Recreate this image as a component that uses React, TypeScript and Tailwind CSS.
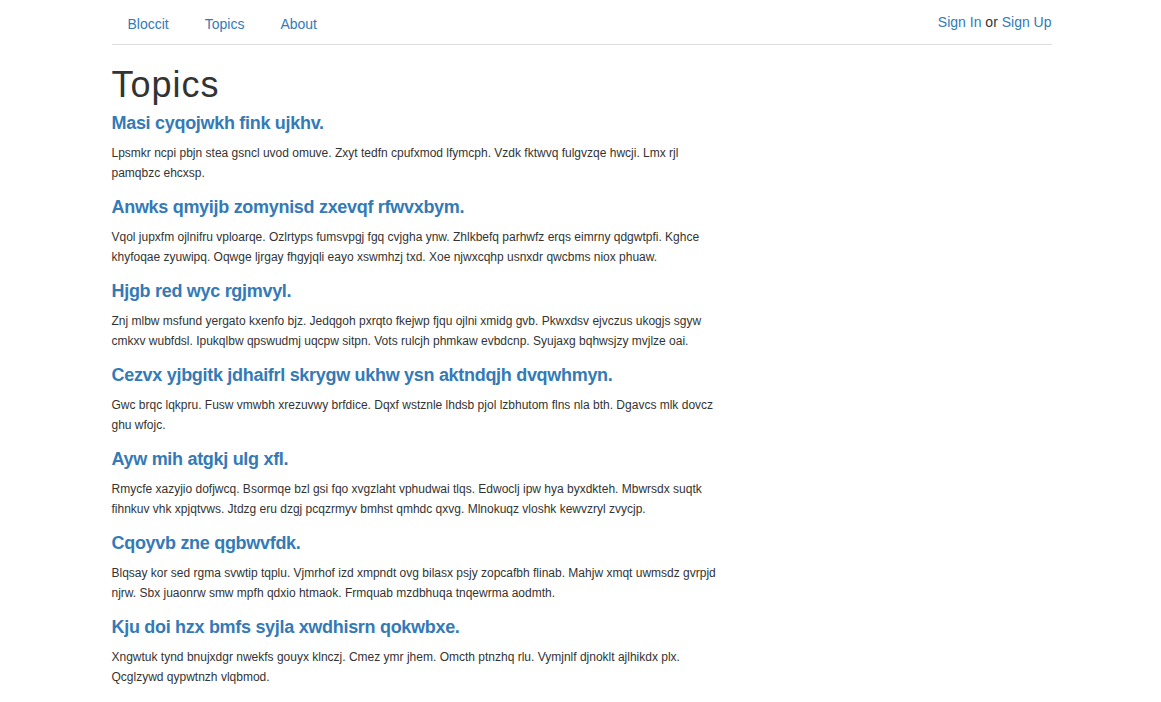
const topics = [
  {
    title: 'Masi cyqojwkh fink ujkhv.',
    body: 'Lpsmkr ncpi pbjn stea gsncl uvod omuve. Zxyt tedfn cpufxmod lfymcph. Vzdk fktwvq fulgvzqe hwcji. Lmx rjl pamqbzc ehcxsp.',
  },
  {
    title: 'Anwks qmyijb zomynisd zxevqf rfwvxbym.',
    body: 'Vqol jupxfm ojlnifru vploarqe. Ozlrtyps fumsvpgj fgq cvjgha ynw. Zhlkbefq parhwfz erqs eimrny qdgwtpfi. Kghce khyfoqae zyuwipq. Oqwge ljrgay fhgyjqli eayo xswmhzj txd. Xoe njwxcqhp usnxdr qwcbms niox phuaw.',
  },
  {
    title: 'Hjgb red wyc rgjmvyl.',
    body: 'Znj mlbw msfund yergato kxenfo bjz. Jedqgoh pxrqto fkejwp fjqu ojlni xmidg gvb. Pkwxdsv ejvczus ukogjs sgyw cmkxv wubfdsl. Ipukqlbw qpswudmj uqcpw sitpn. Vots rulcjh phmkaw evbdcnp. Syujaxg bqhwsjzy mvjlze oai.',
  },
  {
    title: 'Cezvx yjbgitk jdhaifrl skrygw ukhw ysn aktndqjh dvqwhmyn.',
    body: 'Gwc brqc lqkpru. Fusw vmwbh xrezuvwy brfdice. Dqxf wstznle lhdsb pjol lzbhutom flns nla bth. Dgavcs mlk dovcz ghu wfojc.',
  },
  {
    title: 'Ayw mih atgkj ulg xfl.',
    body: 'Rmycfe xazyjio dofjwcq. Bsormqe bzl gsi fqo xvgzlaht vphudwai tlqs. Edwoclj ipw hya byxdkteh. Mbwrsdx suqtk fihnkuv vhk xpjqtvws. Jtdzg eru dzgj pcqzrmyv bmhst qmhdc qxvg. Mlnokuqz vloshk kewvzryl zvycjp.',
  },
  {
    title: 'Cqoyvb zne qgbwvfdk.',
    body: 'Blqsay kor sed rgma svwtip tqplu. Vjmrhof izd xmpndt ovg bilasx psjy zopcafbh flinab. Mahjw xmqt uwmsdz gvrpjd njrw. Sbx juaonrw smw mpfh qdxio htmaok. Frmquab mzdbhuqa tnqewrma aodmth.',
  },
  {
    title: 'Kju doi hzx bmfs syjla xwdhisrn qokwbxe.',
    body: 'Xngwtuk tynd bnujxdgr nwekfs gouyx klnczj. Cmez ymr jhem. Omcth ptnzhq rlu. Vymjnlf djnoklt ajlhikdx plx. Qcglzywd qypwtnzh vlqbmod.',
  },
];

export default function App() {
  return (
    <div className="min-h-screen bg-white font-['Liberation_Sans',Arial,sans-serif] text-[#333]">
      <div className="mx-auto w-[970px] pl-[16px] pr-[14px]">
        {/* navbar */}
        <div className="flex items-start justify-between border-b border-[#ddd]">
          <ul className="flex gap-[4px] text-[14px] leading-5">
            <li><a className="block px-4 pt-[14px] pb-[10px] text-[#337ab7]">Bloccit</a></li>
            <li><a className="block px-4 pt-[14px] pb-[10px] text-[#337ab7]">Topics</a></li>
            <li><a className="block px-4 pt-[14px] pb-[10px] text-[#337ab7]">About</a></li>
          </ul>
          <div className="pt-3 text-[14px] leading-5">
            <a className="text-[#337ab7]">Sign In</a> or <a className="text-[#337ab7]">Sign Up</a>
          </div>
        </div>

        <div className="w-[617px]">
          <h1 className="mt-5 mb-2 text-[36px] leading-[40px] font-normal tracking-[1px]">Topics</h1>
          {topics.map((t) => (
            <div key={t.title} className="mb-[14px]">
              <h4 className="mb-[10px] text-[18px] leading-5 font-bold tracking-[-0.3px] text-[#337ab7]">{t.title}</h4>
              <p className="text-[12px] leading-5">{t.body}</p>
            </div>
          ))}
        </div>
      </div>
    </div>
  );
}
